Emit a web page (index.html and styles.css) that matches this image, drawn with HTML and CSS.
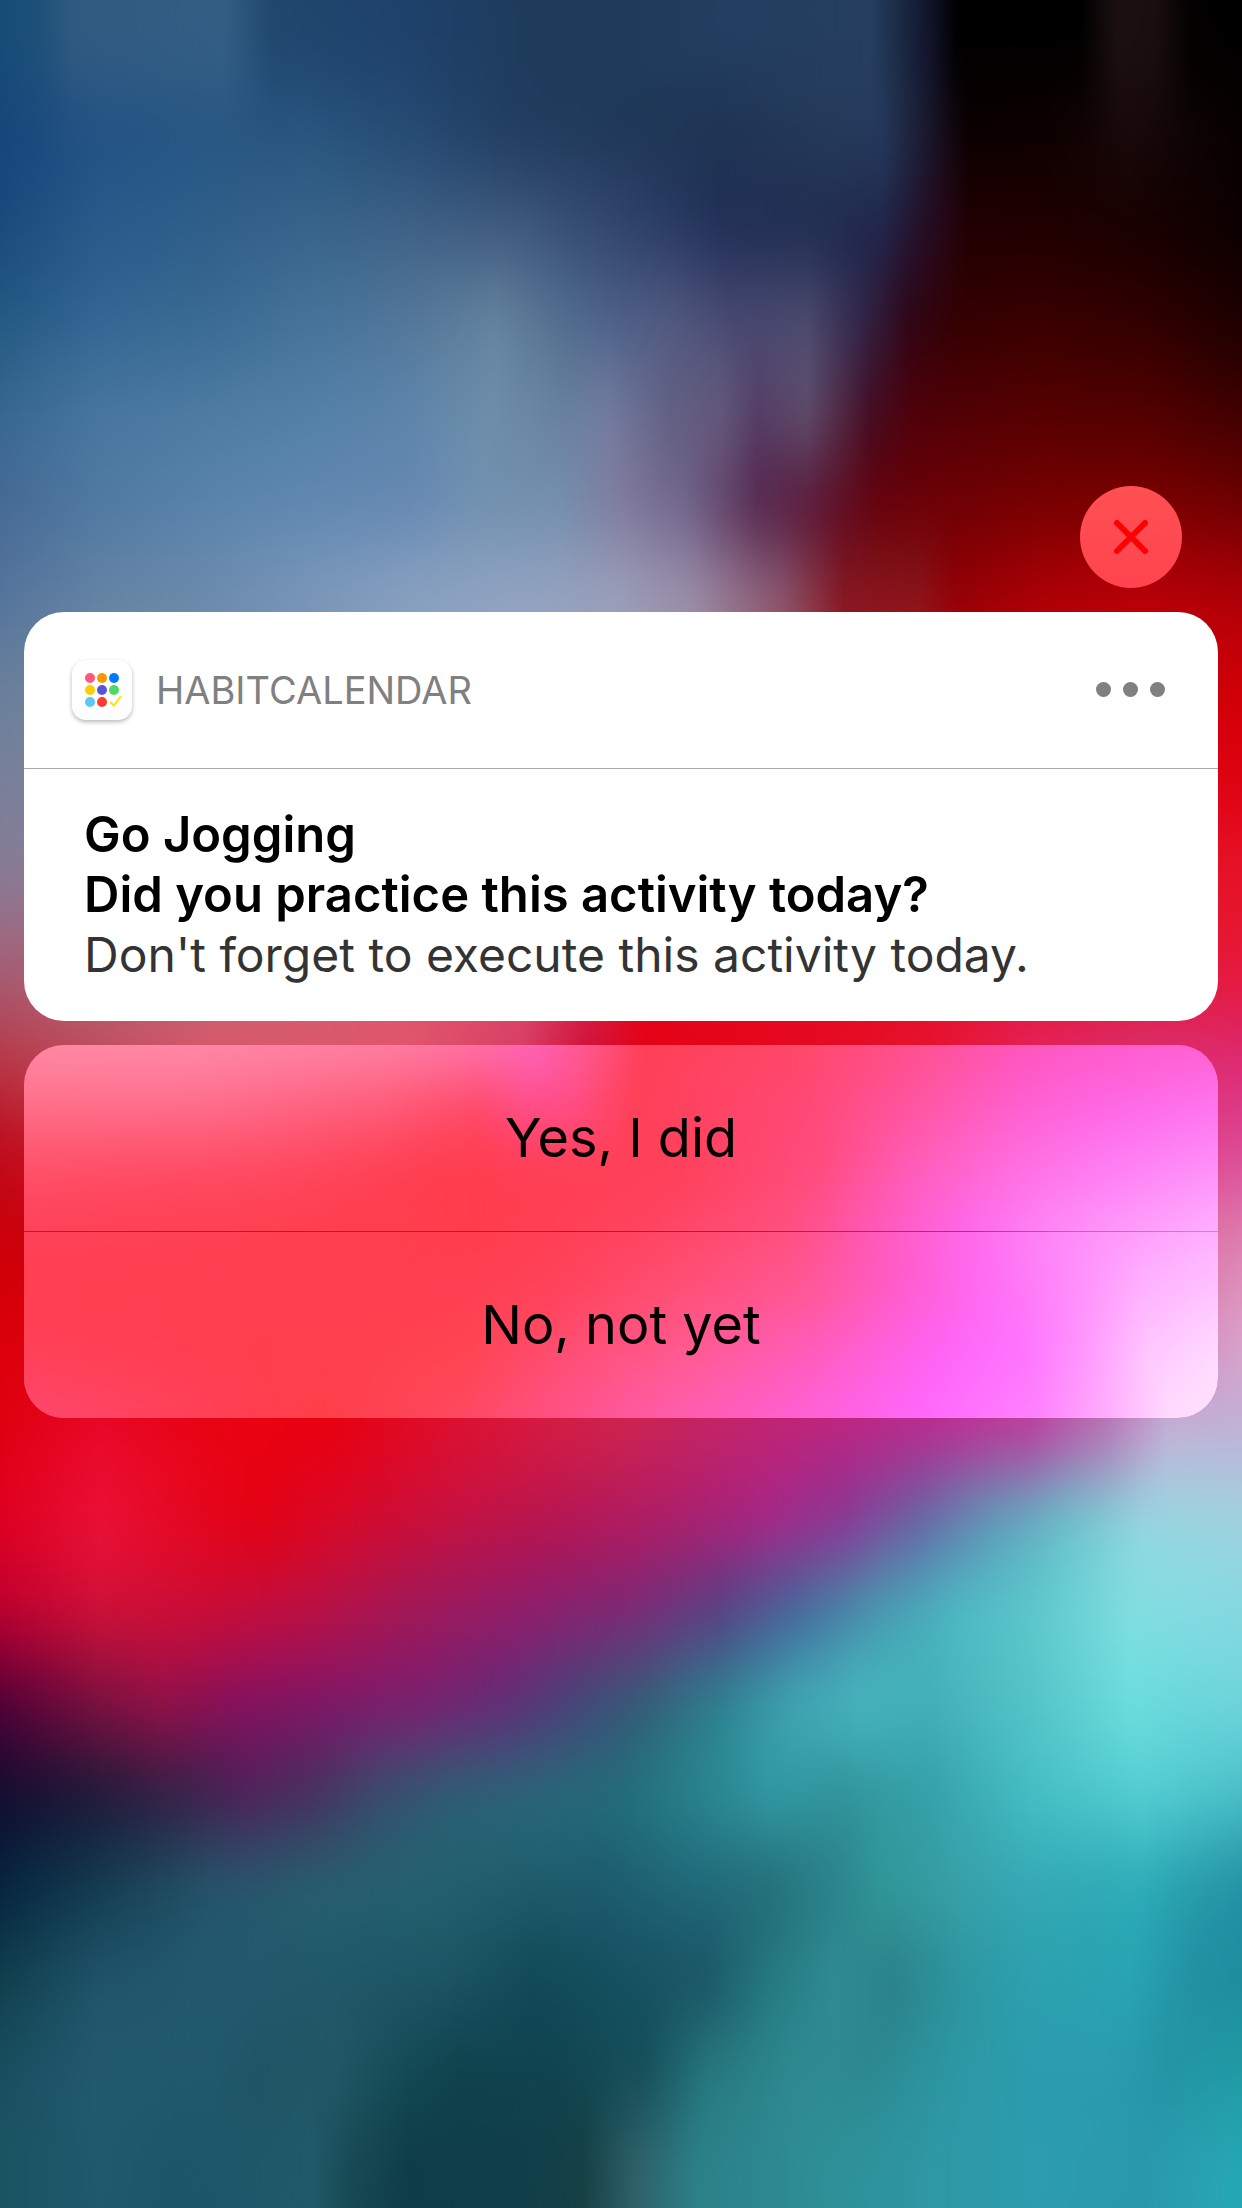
FILE: index.html
```html
<!DOCTYPE html>
<html lang="en">
<head>
<meta charset="utf-8">
<meta name="viewport" content="width=device-width, initial-scale=1">
<title>HabitCalendar reminder</title>
<link rel="stylesheet" href="styles.css">
</head>
<body>
<svg class="defs" aria-hidden="true">
  <filter id="soft-wide" x="0" y="0" width="1" height="1" color-interpolation-filters="sRGB"><feGaussianBlur stdDeviation="0 40"/></filter>
  <filter id="soft-panel" x="0" y="0" width="1" height="1" color-interpolation-filters="sRGB"><feGaussianBlur stdDeviation="0 28"/></filter>
</svg>
<div class="wallpaper" aria-hidden="true">
  <i></i><i></i><i></i><i></i><i></i><i></i><i></i><i></i><i></i><i></i><i></i><i></i>
  <i></i><i></i><i></i><i></i><i></i><i></i><i></i><i></i><i></i><i></i><i></i><i></i>
</div>
<main class="screen">
  <button class="close" type="button" aria-label="Close">
    <svg width="34" height="34" viewBox="0 0 34 34" aria-hidden="true"><path d="M3 3 31 31M31 3 3 31"/></svg>
  </button>
  <article class="card">
    <header class="card-header">
      <svg class="app-icon" viewBox="0 0 60 60" aria-hidden="true">
        <circle cx="18" cy="18" r="5" fill="#ff5878"/><circle cx="30" cy="18" r="5" fill="#ff9500"/><circle cx="42" cy="18" r="5" fill="#007aff"/>
        <circle cx="18" cy="30" r="5" fill="#ffcc00"/><circle cx="30" cy="30" r="5" fill="#5856d6"/><circle cx="42" cy="30" r="5" fill="#4cd964"/>
        <circle cx="18" cy="42" r="5" fill="#5ac8fa"/><circle cx="30" cy="42" r="5" fill="#ff3b30"/>
        <path d="M38 42 42 45.500 49 36" fill="none" stroke="#f8e800" stroke-width="2"/>
      </svg>
      <span class="app-name">HABITCALENDAR</span>
      <button class="more" type="button" aria-label="More options"><i></i><i></i><i></i></button>
    </header>
    <div class="card-body">
      <h1 class="title">Go Jogging</h1>
      <h2 class="title">Did you practice this activity today?</h2>
      <p class="message">Don't forget to execute this activity today.</p>
    </div>
  </article>
  <section class="actions" aria-label="Actions">
    <div class="glass" aria-hidden="true"><i></i><i></i><i></i><i></i><i></i><i></i><i></i></div>
    <button class="action" type="button">Yes, I did</button>
    <div class="divider"></div>
    <button class="action" type="button">No, not yet</button>
  </section>
</main>
</body>
</html>
```
FILE: styles.css
```css
* { box-sizing: border-box; }
body {
  margin: 0;
  min-height: 100vh;
  background: #205060;
  font-family: Inter, "Liberation Sans", sans-serif;
  color: #000;
  overflow-x: hidden;
}
button { margin: 0; padding: 0; border: 0; background: none; font: inherit; color: inherit; cursor: pointer; }
.defs { position: absolute; width: 0; height: 0; }

/* Wallpaper: horizontal colour bands melted into each other vertically */
.wallpaper {
  position: fixed;
  inset: -92px 0;
  z-index: -1;
  display: grid;
  grid-template-rows: 2fr repeat(22, 1fr) 2fr;
  filter: url(#soft-wide);
}
.wallpaper i:nth-child(1) { background: linear-gradient(90deg, #164c78, #1c5078 3%, #315a80 6%, #345e84 18%, #20476e 22%, #1e416b 33%, #1e3b5c 42%, #1f3b5b 50%, #223e60 58%, #263f61 70%, #101228 75%, #000 77%, #000 87%, #1c1011 90%, #1a0e10 93%, #020000 96%, #000); }
.wallpaper i:nth-child(2) { background: linear-gradient(90deg, #15457a, #225285 8%, #265683 17%, #29567f 25%, #264b73 33%, #203c5e 42%, #1f3858 50%, #1e3353 58%, #253a5a 67%, #25395c 71%, #150d1c 76%, #0c0000 78%, #0e0000 84%, #180809 91%, #080000); }
.wallpaper i:nth-child(3) { background: linear-gradient(90deg, #1a4a7c, #285a8a 8%, #305f8a 17%, #38648a 25%, #3f6286 33%, #40587f 42%, #31456d 50%, #212f56 58%, #1f2a4f 67%, #20244a 71%, #260a20 75%, #220002 78%, #200000 84%, #160000 92%, #0c0000); }
.wallpaper i:nth-child(4) { background: linear-gradient(90deg, #235a82, #336694 8%, #3a6b92 17%, #45739a 25%, #54789a 33%, #65859f 40%, #506c8e 46%, #4e6088 50%, #545b82 54%, #494a74 59%, #4c4c70 65%, #332a4e 69%, #2e0516 73%, #330000 77%, #390000 84%, #320000 92%, #1c0000); }
.wallpaper i:nth-child(5) { background: linear-gradient(90deg, #386892, #48779e 8%, #4e7ca3 17%, #5480a8 25%, #5d85ab 33%, #6d8eaa 39%, #68829e 45%, #747da0 49%, #615f82 54%, #655a7c 58%, #563f67 61%, #604e6c 65%, #440c22 70%, #500008 74%, #560000 84%, #520000 92%, #400000); }
.wallpaper i:nth-child(6) { background: linear-gradient(90deg, #466a94, #5079a2 8%, #5a83ac 17%, #6088b0 25%, #6688b2 33%, #7090b0 38%, #748eae 45%, #80799c 50%, #70648a 55%, #55254d 61%, #5a1230 66%, #680008 71%, #780000 84%, #7c0000 92%, #700000); }
.wallpaper i:nth-child(7) { background: linear-gradient(90deg, #54749c, #6584a4 8%, #6d8cad 17%, #7c98ba 25%, #8aa3c2 33%, #94a5c3 42%, #9ba2bc 50%, #9c8ea8 56%, #8c5a70 63%, #861822 68%, #8a161c 74%, #950004 77%, #b00006 84%, #bc0008 92%, #b00008); }
.wallpaper i:nth-child(8) { background: linear-gradient(90deg, #6a809a, #7890ac 25%, #98a4c0 42%, #a090a8 55%, #a81824 68%, #c40008 84%, #d00006); }
.wallpaper i:nth-child(9) { background: linear-gradient(90deg, #78809a, #9a9cb0 50%, #b82840 68%, #e00010); }
.wallpaper i:nth-child(10) { background: linear-gradient(90deg, #887c96, #b08098 50%, #d01028 68%, #e61428); }
.wallpaper i:nth-child(11) { background: linear-gradient(90deg, #a46078, #c85c70 25%, #dc4a68 42%, #e00820 52%, #e60c24 75%, #e61838); }
.wallpaper i:nth-child(12) { background: linear-gradient(90deg, #b83a48, #c05060 8%, #dc5c6c 17%, #e6566c 33%, #d83c66 42%, #cc1040 47%, #e60012 52%, #e60a20 67%, #e61430 75%, #e42460 83%, #d83070 92%, #dd2870); }
.wallpaper i:nth-child(13) { background: linear-gradient(90deg, #be0a1c, #e05068 33%, #e00818 50%, #e01838 75%, #dd4898); }
.wallpaper i:nth-child(14) { background: linear-gradient(90deg, #cc0008, #e00818 50%, #de80b0); }
.wallpaper i:nth-child(15) { background: linear-gradient(90deg, #da0008, #e60010 25%, #e02040 50%, #cc3088 75%, #d450a8 86%, #dca0c8); }
.wallpaper i:nth-child(16) { background: linear-gradient(90deg, #e00010, #e8082a 8%, #ea0414 17%, #e80010 27%, #dc1030 37%, #d41c44 44%, #cc2450 50%, #c02468 58%, #bc2480 67%, #bc2890 75%, #bc389c 83%, #b870b4 89%, #c4b0d6 94%, #c0b0d6); }
.wallpaper i:nth-child(17) { background: linear-gradient(90deg, #e00020, #ec1036 8%, #e60820 15%, #e40010 21%, #da0828 27%, #c81040 36%, #b81450 45%, #b01c68 54%, #a82488 62%, #8c3494 68%, #6464a4 74%, #5c9cb8 80%, #68c4cc 86%, #94d8e0 92%, #a0d4e0); }
.wallpaper i:nth-child(18) { background: linear-gradient(90deg, #c00030, #d01038 8%, #cc0c38 17%, #bc1044 25%, #a01858 33%, #901c6c 42%, #7c2878 51%, #544084 58%, #40689a 64%, #449eb0 71%, #4cbcc4 77%, #5cc8cc 83%, #80dee0 91%, #84dbe2 96%, #84d8e0); }
.wallpaper i:nth-child(19) { background: linear-gradient(90deg, #500038, #7c1040 8%, #941048 13%, #861060 19%, #801468 25%, #7c1c70 34%, #602c78 41%, #404878 47%, #306078 52%, #2c8490 58%, #40aab4 64%, #48b8c0 69%, #42b2b8 75%, #54c4c8 83%, #6cdede 91%, #6ad8dc 96%, #70d6dc); }
.wallpaper i:nth-child(20) { background: linear-gradient(90deg, #100c2c, #1c1838 8%, #342048 15%, #4c2058 20%, #44305c 25%, #34506e 31%, #2a6074 36%, #286878 42%, #22707a 50%, #28848e 56%, #309aa4 62%, #30929a 68%, #34a0a8 75%, #44bec4 83%, #54ced2 92%, #48c0c8); }
.wallpaper i:nth-child(21) { background: linear-gradient(90deg, #042440, #123c50 8%, #24566a 17%, #266070 25%, #246270 33%, #1e5c6c 42%, #1c5a6c 48%, #20687a 56%, #246c76 62%, #2a8088 67%, #309898 71%, #38a0a8 77%, #34a8b4 83%, #2aaab6 92%, #2498a8 97%, #2090a2); }
.wallpaper i:nth-child(22) { background: linear-gradient(90deg, #10404c, #20546a 8%, #235a70 17%, #20586a 25%, #1c5464 36%, #104856 43%, #145060 50%, #1a5464 57%, #247880 62%, #2e8c92 67%, #2a8088 72%, #2c96a0 78%, #2ca0ae 83%, #28a4b2 91%, #2290a2 96%, #1e8c9e); }
.wallpaper i:nth-child(23) { background: linear-gradient(90deg, #184e60, #225a70 8%, #20586c 17%, #1e5464 21%, #205866 27%, #144c56 32%, #0e424c 37%, #104450 45%, #144e58 52%, #26787e 57%, #2e8a90 64%, #2c8890 70%, #2c98a4 77%, #2a9cae 83%, #2a9cb0 89%, #2294a4 94%, #209aa4); }
.wallpaper i:nth-child(24) { background: linear-gradient(90deg, #1a5462, #20586c 8%, #1c5468 14%, #205a6a 25%, #184a54 28%, #0e3c48 33%, #103e4a 42%, #164044 47%, #2f6068 51%, #2c8088 56%, #2e9098 67%, #2e98a4 75%, #2c9cae 83%, #2a98ac 92%, #28a4b2 98%, #24a8b4); }

.screen {
  display: flex;
  flex-direction: column;
  gap: 24px;
  padding: 22vh 24px 24px;
}

.close {
  align-self: flex-end;
  display: grid;
  place-items: center;
  width: 102px;
  height: 102px;
  margin-right: 36px;
  border-radius: 50%;
  background: linear-gradient(#ff5052, #ff4450);
}
.close path { fill: none; stroke: #f00; stroke-width: 6; stroke-linecap: round; }

.card { border-radius: 40px; background: #fff; }
.card-header {
  display: flex;
  align-items: center;
  gap: 24px;
  height: 157px;
  padding: 0 53px 0 48px;
  border-bottom: 1px solid #a8a8a8;
}
.app-icon {
  width: 60px;
  height: 60px;
  border-radius: 14px;
  background: #fefefe;
  box-shadow: 0 2px 4px rgba(0, 0, 0, .28);
}
.app-name { font-size: 38px; line-height: 48px; color: #808080; }
.more { display: flex; gap: 12px; margin-left: auto; }
.more i { width: 15px; height: 15px; border-radius: 50%; background: #808080; }

.card-body { padding: 36px 60px; font-size: 49px; line-height: 60px; }
.title { margin: 0; font-size: inherit; font-weight: 600; }
.message { margin: 0; font-size: 48px; color: #333; }

.actions {
  position: relative;
  overflow: hidden;
  border-radius: 40px;
  background: #ff4868;
}
.action { position: relative; display: block; width: 100%; height: 186px; font-size: 54px; line-height: 66px; }
.divider {
  position: relative;
  height: 1px;
  background: linear-gradient(90deg, #f00, #f00010 60%, #f000c8 79%, #f040e8 88%, #d080d8);
}

/* Tinted glass behind the action buttons */
.glass {
  position: absolute;
  inset: -93px 0;
  display: grid;
  grid-template-rows: 2fr repeat(5, 1fr) 2fr;
  filter: url(#soft-panel);
}
.glass i:nth-child(1) { background: linear-gradient(90deg, #ff8aa4, #ff8aa8 12%, #ff80a4 30%, #ff74a8 37%, #ff62b8 43%, #ff5890 47%, #ff3f55 52%, #ff4868 65%, #ff5090 75%, #ff54b8 83%, #ff5ac8 90%, #ff60d0); }
.glass i:nth-child(2) { background: linear-gradient(90deg, #ff6e88, #ff6c8c 15%, #ff5a78 30%, #ff4868 38%, #ff4c88 42%, #ff4c84 46%, #ff4058 51%, #ff4878 66%, #ff58a8 76%, #ff60d4 84%, #ff68e8 92%, #ff74f0); }
.glass i:nth-child(3) { background: linear-gradient(90deg, #ff5068, #ff4860 20%, #ff3c4c 35%, #ff4058 55%, #ff4c80 67%, #ff5cb8 74%, #ff6cdc 82%, #ff7ef4 91%, #ff90f8); }
.glass i:nth-child(4) { background: linear-gradient(90deg, #ff4058, #ff4050 20%, #ff3c4c 38%, #ff4460 52%, #ff5080 64%, #ff58b8 71%, #ff68ec 79%, #ff88f8 86%, #ffa0fc 94%, #ffb0ff); }
.glass i:nth-child(5) { background: linear-gradient(90deg, #ff4050, #ff3e50 32%, #ff4258 44%, #ff5078 55%, #ff5898 66%, #ff5cd0 74%, #ff6cf4 81%, #ff88fa 87%, #ffb4ff 94%, #ffc4ff); }
.glass i:nth-child(6) { background: linear-gradient(90deg, #ff4058, #ff3e4c 20%, #ff4450 37%, #ff5078 46%, #ff5c94 56%, #ff5cc0 66%, #ff64f8 77%, #ff74ff 84%, #ff98ff 89%, #ffc8ff 94%, #ffdcff); }
.glass i:nth-child(7) { background: linear-gradient(90deg, #ff4870, #ff4058 15%, #ff3e48 25%, #ff4860 36%, #ff5084 44%, #ff5cac 54%, #ff60d4 65%, #ff68fc 75%, #ff84fc 85%, #ffb0fc 91%, #ffdcfc 96%, #ffe0fc); }
```
